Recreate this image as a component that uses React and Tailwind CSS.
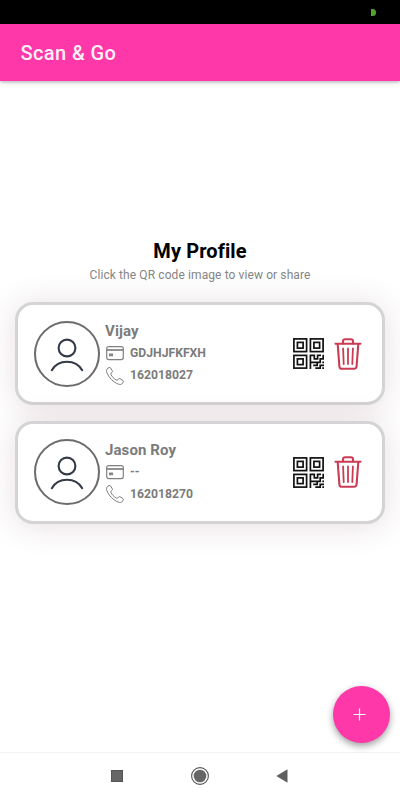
import React from 'react';

const profiles = [
  { name: 'Vijay', card: 'GDJHJFKFXH', phone: '162018027' },
  { name: 'Jason Roy', card: '--', phone: '162018270' },
];

const UserIcon = () => (
  <svg className="w-9 h-9" viewBox="0 0 36 36" fill="none" stroke="#343b47" strokeWidth="2.100" strokeLinecap="round">
    <circle cx="18" cy="12" r="8.400" />
    <path d="M2.800 34.200C9.300 22.900 26.700 22.900 33.200 34.200" />
  </svg>
);

const CardIcon = () => (
  <svg className="w-[18px] h-[15px]" viewBox="0 0 18 15" fill="none" stroke="#808080">
    <rect x="0.700" y="0.700" width="16.600" height="12.900" rx="2" strokeWidth="1.200" />
    <path d="M0.600 4H17.400" strokeWidth="1.700" />
    <rect x="3.400" y="8" width="3.200" height="1.800" fill="#808080" strokeWidth="0.900" />
  </svg>
);

const PhoneIcon = () => (
  <svg className="w-[18px] h-[18px]" viewBox="0 0 18 18" fill="none" stroke="#7a7a7a" strokeWidth="1" strokeLinejoin="round">
    <path d="M1.800 1.300L3 0.600C3.700 0.300 4.300 0.500 4.700 1.100L6.300 3.800C6.600 4.400 6.500 5 6 5.400L5.200 6.100C4.700 6.600 4.700 7 5 7.600C6 9.600 8 11.800 10.300 13.100C10.900 13.400 11.400 13.300 11.800 12.800L12.500 12C12.900 11.500 13.500 11.400 14.100 11.800L16.800 13.400C17.400 13.800 17.600 14.400 17.200 15L16.500 16.200C15.600 17.700 13.900 17.700 12.300 17.100C7.500 15.300 2.700 10.500 0.900 5.700C0.300 4.100 0.300 2.200 1.800 1.300Z" />
  </svg>
);

const QrIcon = () => (
  <svg className="w-[31px] h-[31px]" viewBox="0 0 31 31" fill="none" stroke="#111" strokeWidth="1.700">
    {/* finder patterns */}
    <rect x="0.900" y="0.900" width="12.700" height="12.700" />
    <rect x="4.400" y="4.400" width="5.700" height="5.700" />
    <rect x="17.400" y="0.900" width="12.700" height="12.700" />
    <rect x="20.900" y="4.400" width="5.700" height="5.700" />
    <rect x="0.900" y="17.400" width="12.700" height="12.700" />
    <rect x="4.400" y="20.900" width="5.700" height="5.700" />
    {/* data modules */}
    <path d="M17.400 31V17.400H21.300V20.800H24.600V17.400H28" />
    <path d="M30.200 16.800V20.900H27.200V24.300H17.400" />
    <path d="M24.200 24.300V27.400H20.200M31 24.300H29.300M31 27.400H27.200V30.200H22.300M29.300 30.200H31" />
  </svg>
);

const TrashIcon = () => (
  <svg className="w-7 h-8" viewBox="0 0 28 32" fill="none" stroke="#cb3c54" strokeWidth="2.100" strokeLinecap="round" strokeLinejoin="round">
    <path d="M1.500 5.800H26.500" />
    <path d="M9 5.500V3.400C9 2 9.800 1.200 11.200 1.200H16.800C18.200 1.200 19 2 19 3.400V5.500" />
    <path d="M3.700 6L5.400 28.300C5.500 29.900 6.500 30.800 8 30.800H20C21.500 30.800 22.500 29.900 22.600 28.300L24.300 6" />
    <path d="M9.100 10.500L9.700 26M14 10.500V26M18.900 10.500L18.300 26" strokeWidth="1.800" />
  </svg>
);

const ProfileCard = ({ profile }) => (
  <div className="flex items-center h-[103px] pl-4 pr-5 bg-white border-3 border-[#d4d3d5] rounded-[18px] shadow-[0_2px_32px_rgba(95,35,45,0.15)]">
    <div className="flex items-center justify-center w-[66px] h-[66px] shrink-0 rounded-full border-2 border-[#6d6b6d]">
      <UserIcon />
    </div>
    <div className="ml-[5px] text-[#7b7b7b] font-bold">
      <div className="h-[23px] leading-[22px] text-[15px] tracking-[0.1px]">{profile.name}</div>
      <div className="flex items-center h-[22px] pb-px pl-px text-[12.2px]">
        <CardIcon />
        <span className="ml-[6px]">{profile.card}</span>
      </div>
      <div className="flex items-center h-[22px] pb-px pl-px text-[12.2px]">
        <PhoneIcon />
        <span className="ml-[6px]">{profile.phone}</span>
      </div>
    </div>
    <div className="ml-auto flex items-center gap-[10px]">
      <button aria-label="QR code"><QrIcon /></button>
      <button aria-label="Delete"><TrashIcon /></button>
    </div>
  </div>
);

const App = () => {
  return (
    <div className="relative flex flex-col w-[400px] h-[800px] overflow-hidden bg-white font-['Roboto',sans-serif]">
      {/* Status bar */}
      <div className="flex items-center justify-end h-6 pr-6 bg-black shrink-0">
        <div className="w-[5px] h-[7px] rounded-r-full bg-[#54a32f]"></div>
      </div>

      {/* Header */}
      <header className="flex items-center h-[57px] pl-[20.5px] bg-[#ff38a9] shrink-0 shadow-[0_1px_4px_rgba(0,0,0,0.35)]">
        <h1 className="text-[20px] font-medium tracking-[0.4px] text-white/95">Scan &amp; Go</h1>
      </header>

      {/* Profiles */}
      <main className="flex-1 px-[15px] pt-[156px]">
        <h2 className="text-center text-[20px] leading-7 tracking-[0.1px] font-bold text-black">My Profile</h2>
        <p className="text-center text-[12px] leading-5 tracking-[0.1px] text-[#858585]">Click the QR code image to view or share</p>
        <div className="flex flex-col gap-[15.6px] mt-[17px]">
          {profiles.map((profile) => (
            <ProfileCard key={profile.phone} profile={profile} />
          ))}
        </div>
      </main>

      {/* Floating add button */}
      <button aria-label="Add" className="absolute right-[10px] bottom-[57px] flex items-center justify-center w-[57px] h-[57px] pr-[5px] rounded-full bg-[#ff38a9] shadow-[0_3px_7px_rgba(0,0,0,0.38)]">
        <svg className="w-[13px] h-[13px]" viewBox="0 0 13 13" stroke="#fff" strokeWidth="1.200">
          <path d="M6.500 0.500V12.500M0.500 6.500H12.500" />
        </svg>
      </button>

      {/* System navigation */}
      <nav className="flex items-center justify-between h-12 pl-[111px] pr-[112px] pb-[2px] border-t border-[#f3f3f3] bg-white shrink-0">
        <div className="w-3 h-3 bg-[#666] border border-[#555]"></div>
        <svg className="w-[18px] h-[18px]" viewBox="0 0 18 18">
          <circle cx="9" cy="9" r="8.400" fill="none" stroke="#555" strokeWidth="1.100" />
          <circle cx="9" cy="9" r="6.300" fill="#666" />
        </svg>
        <svg className="w-3 h-[14px]" viewBox="0 0 12 14">
          <path d="M11.500 0.300V13.700L0.300 7Z" fill="#606060" />
        </svg>
      </nav>
    </div>
  );
};

export default App;
